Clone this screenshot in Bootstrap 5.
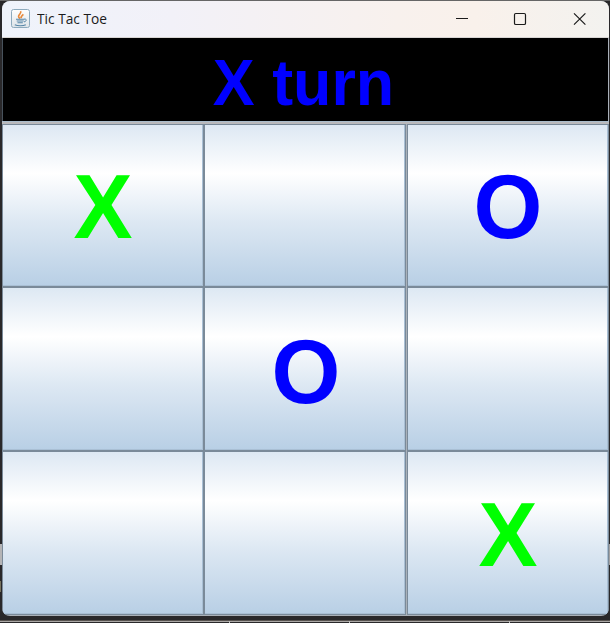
<!DOCTYPE html>
<html lang="en">
<head>
<meta charset="utf-8">
<title>Tic Tac Toe</title>
<link href="https://cdn.jsdelivr.net/npm/bootstrap@5.3.0/dist/css/bootstrap.min.css" rel="stylesheet">
<style>
body{width:610px;height:623px;background:#29282a;font-family:"Liberation Sans",Arial,sans-serif}
.desk{width:610px;height:623px;padding:1px 1px 0 2px;background:
 linear-gradient(#666,#666) 0 0/100% 1px no-repeat,
 linear-gradient(#b4b4b6,#b4b4b6) 0 544px/2px 21px no-repeat,
 linear-gradient(#a0a0a2,#a0a0a2) 609px 544px/1px 21px no-repeat,
 linear-gradient(#77735f,#77735f) 0 581px/1px 11px no-repeat,
 linear-gradient(#c0c0c0,#c0c0c0) 229px 621px/1px 2px no-repeat,
 linear-gradient(#c0c0c0,#c0c0c0) 349px 621px/1px 2px no-repeat,
 linear-gradient(#c0c0c0,#c0c0c0) 509px 621px/1px 2px no-repeat,
 linear-gradient(#57524f,#57524f) 0 620px/100% 1px no-repeat,
 linear-gradient(#aaa7a5,#aaa7a5) 0 621px/100% 1px no-repeat,#29282a}
.window{height:615px;border-radius:8px;background:#a9b0b8}
.titlebar{height:37px;background:linear-gradient(90deg,#eff3fb,#f2f1f8 28%,#f8f1ed 65%,#f9f1eb 78%,#f3f2ef);border-bottom:1px solid #d8d5d3}
.caption-text{margin-left:5px;font:14.5px/20px "Open Sans","Noto Sans",sans-serif;color:#1b1b1b;transform:scaleX(.945);transform-origin:left}
.ctl{width:58px}
.controls{margin-right:2px}
.status{height:83px;margin-right:1px;border-left:1px solid #47515b;background:#000;color:#00f}
.status span{font-size:62.8px;line-height:1;font-weight:700;transform:translate(-2px,3px) scaleY(1.03)}
.divider{height:3px;background:linear-gradient(#a9bccb 0 1px,#b9b9bc 1px 3px)}
.board{display:grid;grid-template-columns:202px 202px 203px;grid-template-rows:163px 164px 164px}
.cell{border:1px solid #7a8a99;border-radius:0;padding:0;font-family:"Liberation Sans",Arial,sans-serif;font-size:88.5px;line-height:1;font-weight:700;background:linear-gradient(#dde8f3,#fff 30%,#dde8f3 60%,#b8cfe5);box-shadow:inset -1px -1px 0 #a9bfd4}
.cell:nth-child(3n){margin-left:1px}
.mark-x{color:#0f0}.mark-o{color:#00f}
.cell span{transform:translate(0,2px) scaleY(1.03)}
.cell:nth-child(5) span{transform:translate(1px,3px) scaleY(1.03)}
</style>
<script src="https://cdn.jsdelivr.net/npm/bootstrap@5.3.0/dist/js/bootstrap.bundle.min.js"></script>
</head>
<body class="m-0 overflow-hidden">
<div class="desk">
<main class="window overflow-hidden d-flex flex-column">
<header class="titlebar d-flex align-items-center flex-shrink-0">
<svg class="ms-2 flex-shrink-0" width="22" height="22" viewBox="0 0 22 22" fill="none">
<defs><linearGradient id="tile" x2="0" y2="1"><stop stop-color="#fff"/><stop offset="1" stop-color="#dce3e8"/></linearGradient></defs>
<rect x="1.5" y="1.5" width="18" height="18" rx="2" fill="url(#tile)" stroke="#8daabd"/>
<path d="M10 10.5C5.8 7.5 12.2 6 10.6 3.2M11.5 10.3C10.2 8.8 12 7.8 13.4 6.4" stroke="#e98a3c" stroke-width="1.6"/>
<path d="M6 11.2h8.3M6.7 13h7M7.5 14.8h5.3M4.8 16.8c3 1.3 8.3 1.2 11-.1" stroke="#5685a7" stroke-width="1.1"/>
<path d="M14 11.2c3-.8 3 2.2 0 2.7" stroke="#5685a7"/>
</svg>
<span class="caption-text text-nowrap">Tic Tac Toe</span>
<div class="controls ms-auto d-flex">
<span class="ctl d-flex justify-content-center"><svg width="14" height="14"><path d="M1 6.5h12" stroke="#1b1b1b" fill="none"/></svg></span>
<span class="ctl d-flex justify-content-center"><svg width="14" height="14"><rect x="1.5" y="1.5" width="11" height="11" rx="1.3" stroke="#1b1b1b" stroke-width="1.2" fill="none"/></svg></span>
<span class="ctl d-flex justify-content-center ps-1"><svg width="14" height="14"><path d="M1 1.3l11.4 11.4M12.4 1.3L1 12.7" stroke="#1b1b1b" stroke-width="1.2" fill="none"/></svg></span>
</div>
</header>
<div class="status d-flex align-items-center justify-content-center flex-shrink-0"><span>X turn</span></div>
<div class="divider flex-shrink-0"></div>
<section class="board">
<button class="cell d-flex align-items-center justify-content-center mark-x"><span>X</span></button>
<button class="cell" aria-label="Empty"></button>
<button class="cell d-flex align-items-center justify-content-center mark-o"><span>O</span></button>
<button class="cell" aria-label="Empty"></button>
<button class="cell d-flex align-items-center justify-content-center mark-o"><span>O</span></button>
<button class="cell" aria-label="Empty"></button>
<button class="cell" aria-label="Empty"></button>
<button class="cell" aria-label="Empty"></button>
<button class="cell d-flex align-items-center justify-content-center mark-x"><span>X</span></button>
</section>
</main>
</div>
</body>
</html>
